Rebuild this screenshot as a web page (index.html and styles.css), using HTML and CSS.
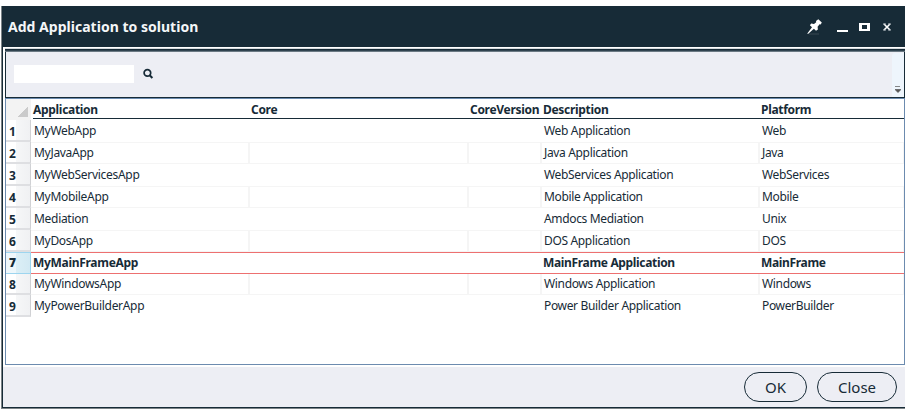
FILE: index.html
```html
<!DOCTYPE html>
<html lang="en">
<head>
<meta charset="utf-8">
<title>Add Application to solution</title>
<link rel="stylesheet" href="styles.css">
</head>
<body>
<div class="window">
  <header class="titlebar">
    <h1>Add Application to solution</h1>
    <div class="controls">
      <svg class="pin" width="16" height="16" viewBox="0 0 16 16"><path d="M9 2 11.3.2 14.8 3.6 13.7 5.4 12.6 5.2 10.6 7.8 10.9 10.5 9 11.7 6.9 9.8 1 14.9.3 14.4 5 8.2 2.9 6.3 4.2 4.5 7 4.9 9.2 3.2Z" fill="#fff"/><path d="M2 15h10" stroke="#45545e" stroke-width=".7"/></svg>
      <svg width="62" height="16" viewBox="0 0 62 16" shape-rendering="crispEdges"><path d="M4 11h11v2H4z" fill="#fff"/><path d="M26 4h11v8H26zM29 6v4h5V6z" fill="#fff" fill-rule="evenodd"/><path d="m51 5 6 6m0-6-6 6" stroke="#fff" stroke-width="1.6" shape-rendering="auto"/><path d="M50 5h3m2 0h3m-8 6h3m2 0h3" stroke="#b8c0c6" shape-rendering="auto"/></svg>
    </div>
  </header>
  <main class="content">
    <div class="toolbar">
      <div class="tools">
        <input class="search" type="text" aria-label="Search">
        <svg width="12" height="12" viewBox="0 0 12 12"><circle cx="5.4" cy="4.9" r="3.3" fill="none" stroke="#172b37" stroke-width="1.7"/><path d="m7.4 7 3 3" stroke="#172b37" stroke-width="2"/></svg>
      </div>
      <div class="overflow"><svg width="6" height="7" viewBox="0 0 6 7"><path d="M0 .5h5M0 3.5h6L3 6.5z" stroke="#555" stroke-width=".7" fill="#555"/></svg></div>
    </div>
    <div class="grid">
      <div class="row head"><div class="corner"></div><div>Application</div><div>Core</div><div>CoreVersion</div><div>Description</div><div>Platform</div></div>
      <div class="row"><b>1</b><div>MyWebApp</div><div></div><div></div><div>Web Application</div><div>Web</div></div>
      <div class="row even"><b>2</b><div>MyJavaApp</div><div></div><div></div><div>Java Application</div><div>Java</div></div>
      <div class="row"><b>3</b><div>MyWebServicesApp</div><div></div><div></div><div>WebServices Application</div><div>WebServices</div></div>
      <div class="row even"><b>4</b><div>MyMobileApp</div><div></div><div></div><div>Mobile Application</div><div>Mobile</div></div>
      <div class="row"><b>5</b><div>Mediation</div><div></div><div></div><div>Amdocs Mediation</div><div>Unix</div></div>
      <div class="row even"><b>6</b><div>MyDosApp</div><div></div><div></div><div>DOS Application</div><div>DOS</div></div>
      <div class="row selected"><b>7</b><div>MyMainFrameApp</div><div></div><div></div><div>MainFrame Application</div><div>MainFrame</div></div>
      <div class="row even short"><b>8</b><div>MyWindowsApp</div><div></div><div></div><div>Windows Application</div><div>Windows</div></div>
      <div class="row"><b>9</b><div>MyPowerBuilderApp</div><div></div><div></div><div>Power Builder Application</div><div>PowerBuilder</div></div>
    </div>
  </main>
  <footer class="footer"><button class="ok">OK</button><button class="close">Close</button></footer>
</div>
</body>
</html>
```

FILE: styles.css
```css
* { box-sizing: border-box; }
body { margin: 0; padding-top: 6px; height: 409px; overflow: hidden; background: #fff; color: #172b37; font: 12px/16px "Noto Sans", sans-serif; }
.window { height: 403px; margin-left: 1px; border-left: 1px solid #7c8387; border-bottom: 1px solid #7c8387; display: flex; flex-direction: column; background: #172b37; padding: 0 0 1px 1px; }
.titlebar { height: 41px; flex: none; display: flex; align-items: center; justify-content: space-between; padding: 0 10px 0 5px; }
h1 { margin: 1px 0 0; font-size: 14px; line-height: 20px; color: #f4f6f7; white-space: nowrap; letter-spacing: .02px; }
.controls { display: flex; align-items: center; gap: 10px; }
.controls svg { display: block; }
.content { height: 320px; flex: none; background: #fff; padding: 1px 0 2px 2px; }
.toolbar { height: 50px; border: 1px solid #172b37; border-top: 0; background: #edeef4; display: flex; justify-content: space-between; position: relative; padding-top: 5px; }
.toolbar::before { content: ""; position: absolute; left: -1px; right: -1px; top: 0; height: 4px; background: linear-gradient(#d4d9dd 1px, #172b37 1px 2px, #30434f 2px 3px, #6b7983 3px); }
.tools { display: flex; gap: 8px; padding: 12px 0 0 8px; }
.tools svg { margin-top: 3px; }
.search { width: 120px; height: 18px; border: 0; padding: 0; background: #fff; }
.overflow { width: 12px; background: #eef5fc; border-radius: 3px 0 0 0; display: flex; align-items: flex-end; justify-content: center; padding-bottom: 4px; }
.grid { height: 267px; border: 1px solid #6c8baf; background: #fff; }
.row { height: 22px; display: grid; grid-template-columns: 25px 219px 219px 73px 218px 1fr; white-space: nowrap; }
.row > div { padding: 3px 0 0 2px; border-right: 2px solid transparent; letter-spacing: -.34px; }
.row > div:nth-child(2) { padding-left: 3px; letter-spacing: -.3px; }
.row > div:last-child { border-right-width: 1px; }
.row > b { font-size: 12px; padding: 4px 0 0 3px; border-right: 1px solid #d0d1d4; border-bottom: 2px solid #dedfe2; background: linear-gradient(90deg, #fff 10px, #f6f7f8 10px, #f0f1f3 24px); }
.row.even > div { border-right-color: #f5f5f5; border-top: 1px solid #f5f5f5; border-bottom: 1px solid #f5f5f5; padding-top: 2px; }
.row.short { height: 21px; }
.row.short > div { border-top: 0; }
.row.short > b { padding-top: 3px; }
.row.selected { font-weight: 700; }
.row.selected > div { border: 0; border-top: 1px solid #ed7070; border-bottom: 1px solid #ed7070; padding: 2px 0 0 1px; }
.row.selected > div:nth-child(2) { padding-left: 2px; }
.row.selected > b { border: 1px solid #9dd5ef; border-left: 0; padding-top: 2px; background: linear-gradient(90deg, #eef7fb 10px, #dceff6 10px, #d2e9f3); }
.row.head { height: 21px; position: relative; font-weight: 700; }
.row.head > div { border: 0; padding: 3px 0 0 1px; letter-spacing: -.3px; }
.row.head > div:nth-child(2) { padding-left: 2px; }
.row.head::after { content: ""; position: absolute; left: 27px; right: 0; top: 19px; height: 1px; background: #172b37; }
.row.head > .corner { background: linear-gradient(135deg, transparent 50%, #cbcbcb 50%) 12px 8px / 10px 10px no-repeat #f3f3f3; }
.footer { flex: 1; background: #edeef4; display: flex; justify-content: flex-end; gap: 10px; padding: 5px 8px 0 0; }
button { height: 30px; border: 1px solid #172b37; border-radius: 15px; background: transparent; color: #172b37; font: 15px/20px "Noto Sans", sans-serif; padding: 0; }
.ok { width: 63px; }
.close { width: 80px; }
```
